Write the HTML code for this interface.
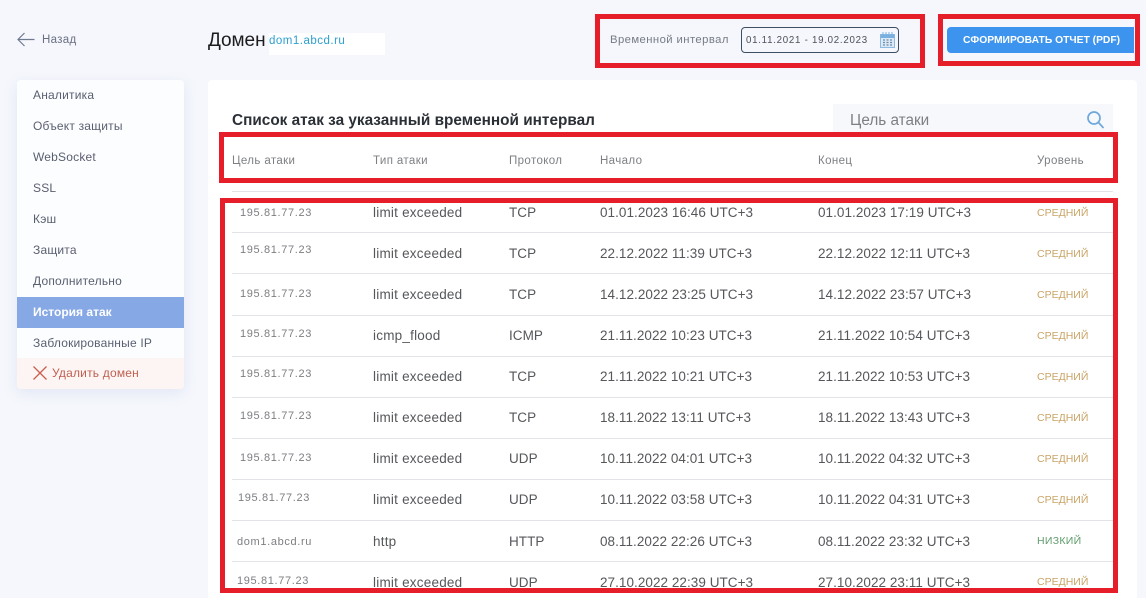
<!DOCTYPE html>
<html lang="ru"><head><meta charset="utf-8"><title>История атак</title>
<style>
html,body{margin:0;padding:0;height:598px;overflow:hidden}
body{width:1146px;position:relative;background:#f5f7fc;font-family:"Liberation Sans",sans-serif;color:#444}
.a{position:absolute;white-space:nowrap;line-height:1}
.side{position:absolute;left:17px;top:80px;width:167px;height:309px;background:#fcfdff;border-radius:4px;box-shadow:0 4px 14px rgba(130,150,200,.16)}
.m{position:absolute;left:33px;font-size:12px;line-height:14px;color:#5a5f70;white-space:nowrap;letter-spacing:.2px}
.card{position:absolute;left:208px;top:80px;width:929px;height:518px;background:#fff;border-radius:4px 4px 0 0}
.red{position:absolute;border:5px solid #e61e2a;box-sizing:border-box}
.l{position:absolute;left:232px;width:881px;height:1px;background:#e2e4e7}
.th{position:absolute;top:155px;font-size:11.5px;line-height:13px;color:#7d7f83;white-space:nowrap;letter-spacing:.38px}
.t{position:absolute;font-size:13.5px;line-height:16px;color:#55575b;white-space:nowrap;margin-top:1px;letter-spacing:.05px}
.w{letter-spacing:.22px}
.ip{position:absolute;font-size:11px;line-height:13px;color:#7c7e82;white-space:nowrap;letter-spacing:.65px;margin-top:1px}
.s{position:absolute;left:1037px;font-size:10.5px;line-height:12px;color:#c9a466;white-space:nowrap;margin-top:1px}
.g{color:#5f9c6c;letter-spacing:.3px}
</style></head><body>
<svg class="a" style="left:17px;top:32px" width="18" height="15" viewBox="0 0 18 15" fill="none" stroke="#6f7a90" stroke-width="1.2"><path d="M17.500 7.500H1M7.500 1 1 7.500 7.500 14"/></svg>
<div class="a" style="left:42px;top:35px;font-size:11.5px;color:#6a7082;letter-spacing:.3px">Назад</div>
<div class="a" style="left:208px;top:31px;font-size:19px;color:#1c1c1c;letter-spacing:-.05px">Домен</div>
<div class="a" style="left:269px;top:33px;width:116px;height:22px;background:#fff"></div>
<div class="a" style="left:269px;top:36px;font-size:11.5px;color:#2c9fd0;letter-spacing:.5px">dom1.abcd.ru</div>

<div class="a" style="left:610px;top:35px;font-size:11.3px;color:#777b84;letter-spacing:.42px">Временной интервал</div>
<div class="a" style="left:741px;top:27px;width:158px;height:26px;box-sizing:border-box;border:1px solid #3e4f63;border-radius:4px"></div>
<div class="a" style="left:746px;top:36px;font-size:9.7px;color:#4c5058;letter-spacing:.74px">01.11.2021 - 19.02.2023</div>
<svg class="a" style="left:880px;top:32px" width="15" height="16" viewBox="0 0 15 16"><rect x=".5" y="2.500" width="14" height="13" fill="#dbe8f5" stroke="#8fbbe2"/><rect x=".5" y="2.500" width="14" height="3.500" fill="#7ab0e0"/><path d="M3 0v3M6 0v3M9 0v3M12 0v3" stroke="#7ab0e0"/><path d="M3 8h2M6.500 8h2M10 8h2M3 10.500h2M6.500 10.500h2M10 10.500h2M3 13h2M6.500 13h2M10 13h2" stroke="#6d8caa" stroke-width="1.200"/></svg>
<div class="a" style="left:947px;top:27px;width:187px;height:26px;background:#3d94ee;border-radius:4px 0 0 4px"></div>
<div class="a" style="left:963px;top:36px;font-size:10.3px;font-weight:bold;color:#fff">СФОРМИРОВАТЬ ОТЧЕТ (PDF)</div>

<div class="side"></div>
<div class="m" style="top:88px">Аналитика</div>
<div class="m" style="top:119px">Объект защиты</div>
<div class="m" style="top:150px">WebSocket</div>
<div class="m" style="top:181px">SSL</div>
<div class="m" style="top:212px">Кэш</div>
<div class="m" style="top:243px">Защита</div>
<div class="m" style="top:274px">Дополнительно</div>
<div class="a" style="left:17px;top:297px;width:167px;height:31px;background:#86a8e4"></div>
<div class="m" style="top:305px;color:#fff;font-weight:bold;letter-spacing:0">История атак</div>
<div class="m" style="top:336px">Заблокированные IP</div>
<div class="a" style="left:17px;top:358px;width:167px;height:31px;background:#fdf5f3;border-radius:0 0 4px 4px"></div>
<svg class="a" style="left:33px;top:366px" width="14" height="14" viewBox="0 0 14 14" stroke="#c9604f" stroke-width="1.300"><path d="M.5.500l13 13M13.500.500l-13 13"/></svg>
<div class="m" style="left:52px;top:366px;color:#bf5f50">Удалить домен</div>

<div class="card"></div>
<div class="a" style="left:232px;top:113px;font-size:15.35px;font-weight:bold;color:#2b2f36">Список атак за указанный временной интервал</div>
<div class="a" style="left:833px;top:104px;width:280px;height:28px;background:#f6f8fc"></div>
<div class="a" style="left:850px;top:113px;font-size:15.3px;color:#7d7f83">Цель атаки</div>
<svg class="a" style="left:1086px;top:110px" width="19" height="19" viewBox="0 0 19 19" fill="none" stroke="#6ea8dc" stroke-width="1.700"><circle cx="8" cy="8" r="6"/><path d="M12.500 12.500l5 5.500"/></svg>

<div class="th" style="left:232px">Цель атаки</div>
<div class="th" style="left:373px">Тип атаки</div>
<div class="th" style="left:509px">Протокол</div>
<div class="th" style="left:600px">Начало</div>
<div class="th" style="left:818px">Конец</div>
<div class="th" style="left:1037px">Уровень</div>
<div class="l" style="top:191px"></div>
<div class="l" style="top:232px"></div>
<div class="l" style="top:273px"></div>
<div class="l" style="top:315px"></div>
<div class="l" style="top:356px"></div>
<div class="l" style="top:397px"></div>
<div class="l" style="top:438px"></div>
<div class="l" style="top:479px"></div>
<div class="l" style="top:520px"></div>
<div class="l" style="top:561px"></div>

<div class="ip" style="left:240px;top:206px">195.81.77.23</div><div class="t w" style="left:373px;top:204px">limit exceeded</div><div class="t" style="left:509px;top:204px">TCP</div><div class="t" style="left:600px;top:204px">01.01.2023 16:46 UTC+3</div><div class="t" style="left:818px;top:204px">01.01.2023 17:19 UTC+3</div><div class="s" style="top:206px">СРЕДНИЙ</div>
<div class="ip" style="left:240px;top:243px">195.81.77.23</div><div class="t w" style="left:373px;top:245px">limit exceeded</div><div class="t" style="left:509px;top:245px">TCP</div><div class="t" style="left:600px;top:245px">22.12.2022 11:39 UTC+3</div><div class="t" style="left:818px;top:245px">22.12.2022 12:11 UTC+3</div><div class="s" style="top:247px">СРЕДНИЙ</div>
<div class="ip" style="left:240px;top:287px">195.81.77.23</div><div class="t w" style="left:373px;top:286px">limit exceeded</div><div class="t" style="left:509px;top:286px">TCP</div><div class="t" style="left:600px;top:286px">14.12.2022 23:25 UTC+3</div><div class="t" style="left:818px;top:286px">14.12.2022 23:57 UTC+3</div><div class="s" style="top:288px">СРЕДНИЙ</div>
<div class="ip" style="left:240px;top:327px">195.81.77.23</div><div class="t w" style="left:373px;top:327px">icmp_flood</div><div class="t" style="left:509px;top:327px">ICMP</div><div class="t" style="left:600px;top:327px">21.11.2022 10:23 UTC+3</div><div class="t" style="left:818px;top:327px">21.11.2022 10:54 UTC+3</div><div class="s" style="top:329px">СРЕДНИЙ</div>
<div class="ip" style="left:240px;top:367px">195.81.77.23</div><div class="t w" style="left:373px;top:368px">limit exceeded</div><div class="t" style="left:509px;top:368px">TCP</div><div class="t" style="left:600px;top:368px">21.11.2022 10:21 UTC+3</div><div class="t" style="left:818px;top:368px">21.11.2022 10:53 UTC+3</div><div class="s" style="top:370px">СРЕДНИЙ</div>
<div class="ip" style="left:240px;top:409px">195.81.77.23</div><div class="t w" style="left:373px;top:409px">limit exceeded</div><div class="t" style="left:509px;top:409px">TCP</div><div class="t" style="left:600px;top:409px">18.11.2022 13:11 UTC+3</div><div class="t" style="left:818px;top:409px">18.11.2022 13:43 UTC+3</div><div class="s" style="top:411px">СРЕДНИЙ</div>
<div class="ip" style="left:240px;top:451px">195.81.77.23</div><div class="t w" style="left:373px;top:450px">limit exceeded</div><div class="t" style="left:509px;top:450px">UDP</div><div class="t" style="left:600px;top:450px">10.11.2022 04:01 UTC+3</div><div class="t" style="left:818px;top:450px">10.11.2022 04:32 UTC+3</div><div class="s" style="top:452px">СРЕДНИЙ</div>
<div class="ip" style="left:238px;top:491px">195.81.77.23</div><div class="t w" style="left:373px;top:491px">limit exceeded</div><div class="t" style="left:509px;top:491px">UDP</div><div class="t" style="left:600px;top:491px">10.11.2022 03:58 UTC+3</div><div class="t" style="left:818px;top:491px">10.11.2022 04:31 UTC+3</div><div class="s" style="top:493px">СРЕДНИЙ</div>
<div class="ip" style="left:237px;top:535px">dom1.abcd.ru</div><div class="t w" style="left:373px;top:533px">http</div><div class="t" style="left:509px;top:533px">HTTP</div><div class="t" style="left:600px;top:533px">08.11.2022 22:26 UTC+3</div><div class="t" style="left:818px;top:533px">08.11.2022 23:32 UTC+3</div><div class="s g" style="top:534px">НИЗКИЙ</div>
<div class="ip" style="left:237px;top:574px">195.81.77.23</div><div class="t w" style="left:373px;top:574px">limit exceeded</div><div class="t" style="left:509px;top:574px">UDP</div><div class="t" style="left:600px;top:574px">27.10.2022 22:39 UTC+3</div><div class="t" style="left:818px;top:574px">27.10.2022 23:11 UTC+3</div><div class="s" style="top:575px">СРЕДНИЙ</div>

<div class="a" style="left:225px;top:588px;width:888px;height:10px;background:#fff"></div>
<div class="red" style="left:595px;top:14px;width:330px;height:54px"></div>
<div class="red" style="left:938px;top:14px;width:202px;height:52px"></div>
<div class="red" style="left:219px;top:132px;width:899px;height:51px"></div>
<div class="red" style="left:220px;top:198px;width:898px;height:395px"></div>
</body></html>
